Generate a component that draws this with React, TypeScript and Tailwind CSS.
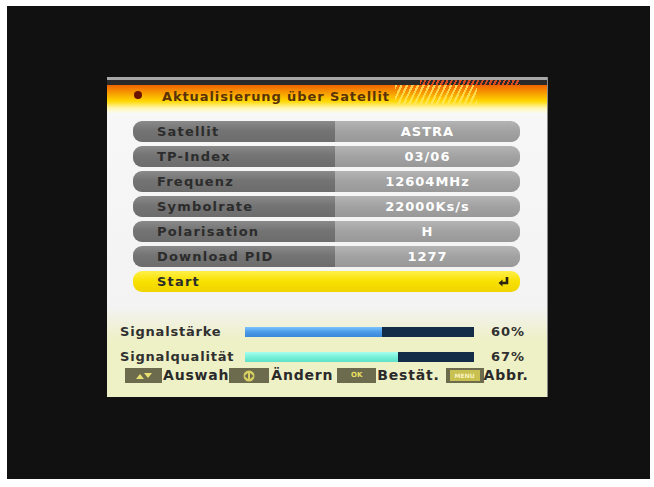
import React from "react";

const rows: [string, string][] = [
  ["Satellit", "ASTRA"],
  ["TP-Index", "03/06"],
  ["Frequenz", "12604MHz"],
  ["Symbolrate", "22000Ks/s"],
  ["Polarisation", "H"],
  ["Download PID", "1277"],
];

function Row({ label, value }: { label: string; value: string }) {
  return (
    <div className="flex h-[21px] w-[387px] overflow-hidden rounded-[9px] shadow-[inset_0_-2px_0_rgba(0,0,0,0.25)]">
      <div className="flex w-[202px] items-center bg-[linear-gradient(to_bottom,#8a8a8a,#747474_45%,#6c6c6c)] pl-[24px] text-[13px] font-bold tracking-[1.2px] text-[#2c2c2c]">
        {label}
      </div>
      <div className="flex flex-1 items-center justify-center bg-[linear-gradient(to_bottom,#b4b4b4,#a2a2a2_50%,#989898)] text-[13px] font-bold tracking-[1px] text-white">
        {value}
      </div>
    </div>
  );
}

function SignalRow({ label, pct, fill }: { label: string; pct: number; fill: string }) {
  return (
    <div className="flex h-[22px] items-center pl-[13px] pr-[22px]">
      <div className="w-[125px] text-[13px] font-bold tracking-[0.8px] text-[#303030]">{label}</div>
      <div className="relative h-[10px] w-[229px] bg-[#132c48]">
        <div className={`absolute left-0 top-0 h-full ${fill}`} style={{ width: `${pct}%` }} />
      </div>
      <div className="flex-1 text-right text-[13px] font-bold tracking-[1px] text-[#303030]">{pct}%</div>
    </div>
  );
}

function KeyBox({ children, w }: { children: React.ReactNode; w: string }) {
  return (
    <div className={`flex h-[15px] ${w} shrink-0 items-center justify-center bg-[#6d6b4e]`}>{children}</div>
  );
}

export default function App() {
  return (
    <div
      className="h-[487px] w-[654px] bg-white pl-[7px] pr-[4px] pt-[6px] pb-[8px]"
      style={{ fontFamily: '"DejaVu Sans", "Liberation Sans", Arial, sans-serif' }}
    >
      <div className="h-full w-full bg-[#111111] pl-[100px] pt-[71px]">
        <div className="flex h-[320px] w-[440px] flex-col bg-[linear-gradient(to_bottom,#f8f8f8,#f3f3f3_72%,#eef0c6_82%,#eef0c6)] shadow-[1px_0_0_#8a8a8a]">
          {/* top gray line */}
          <div className="h-[3px] bg-[#a8a8a8]" />
          {/* dark strip with stripes */}
          <div className="flex h-[5px] bg-[#2a2a2a]">
            <div className="ml-[313px] h-full w-[100px] bg-[repeating-linear-gradient(115deg,#d84a20_0px,#d84a20_2px,transparent_2px,transparent_4px)]" />
          </div>
          {/* header */}
          <div className="relative flex h-[28px] items-center bg-[linear-gradient(to_bottom,#f06400,#f79a00_28%,#ffd800_58%,#fff6b0_82%,#fbfbf0)]">
            <div className="absolute left-[288px] top-0 h-[20px] w-[82px] bg-[repeating-linear-gradient(115deg,#ffe860_0px,#ffe860_2px,transparent_2px,transparent_5px)] opacity-80" />
            <div className="relative top-[-4px] ml-[27px] h-[8px] w-[8px] rounded-full bg-[#6a1400]" />
            <div className="relative top-[-2px] ml-[20px] text-[13px] font-bold tracking-[0.9px] text-[#5a3208]">
              Aktualisierung über Satellit
            </div>
          </div>
          {/* rows */}
          <div className="ml-[26px] mt-[8px] flex flex-col gap-[4px]">
            {rows.map(([l, v]) => (
              <Row key={l} label={l} value={v} />
            ))}
            <div className="flex h-[21px] w-[387px] items-center justify-between rounded-[9px] bg-[linear-gradient(to_bottom,#fff04a,#f8e000_50%,#f0d400)] pl-[24px] pr-[10px] text-[13px] font-bold tracking-[1.2px] text-[#2c2c2c]">
              <span>Start</span>
              <svg width="12" height="10" viewBox="0 0 12 10">
                <path d="M9 0 V6 H4" stroke="#2a2410" strokeWidth="2.6" fill="none" />
                <path d="M0.5 6 L4.5 2.5 V9.5 Z" fill="#2a2410" />
              </svg>
            </div>
          </div>
          {/* signal */}
          <div className="mt-[29px] flex flex-col gap-[3px]">
            <SignalRow label="Signalstärke" pct={60} fill="bg-[linear-gradient(to_bottom,#7cc4ff,#4a9ae8_50%,#3a88d8)]" />
            <SignalRow label="Signalqualität" pct={67} fill="bg-[linear-gradient(to_bottom,#a8fff0,#78f0da_50%,#60e0c8)]" />
          </div>
          {/* footer */}
          <div className="-mt-[3px] flex items-center pl-[18px] text-[14px] font-bold tracking-[0.8px] text-[#2a2a2a]">
            <KeyBox w="w-[37px]">
              <svg width="18" height="8" viewBox="0 0 18 8">
                <path d="M1 7 L5 2 L9 7 Z" fill="#e8e070" />
                <path d="M9 1 L17 1 L13 6 Z" fill="#e8e070" />
              </svg>
            </KeyBox>
            <span className="ml-[1px]">Auswah</span>
            <KeyBox w="w-[40px]">
              <svg width="12" height="12" viewBox="0 0 12 12">
                <circle cx="6" cy="6" r="5.5" fill="#d8d060" />
                <path d="M1.5 6 L5 3 V9 Z M10.5 6 L7 3 V9 Z" fill="#6d6b4e" />
              </svg>
            </KeyBox>
            <span className="ml-[2px]">Ändern</span>
            <div className="ml-[4px]">
              <KeyBox w="w-[39px]">
                <span className="text-[7px] font-bold tracking-normal text-[#e8e060]">OK</span>
              </KeyBox>
            </div>
            <span className="ml-[1px]">Bestät.</span>
            <div className="ml-[6px]">
              <KeyBox w="w-[38px]">
                <div className="flex h-[11px] w-[30px] items-center justify-center bg-[#c8c050] text-[6px] font-bold tracking-normal text-[#f8f4c0]">
                  MENU
                </div>
              </KeyBox>
            </div>
            <span>Abbr.</span>
          </div>
        </div>
      </div>
    </div>
  );
}
